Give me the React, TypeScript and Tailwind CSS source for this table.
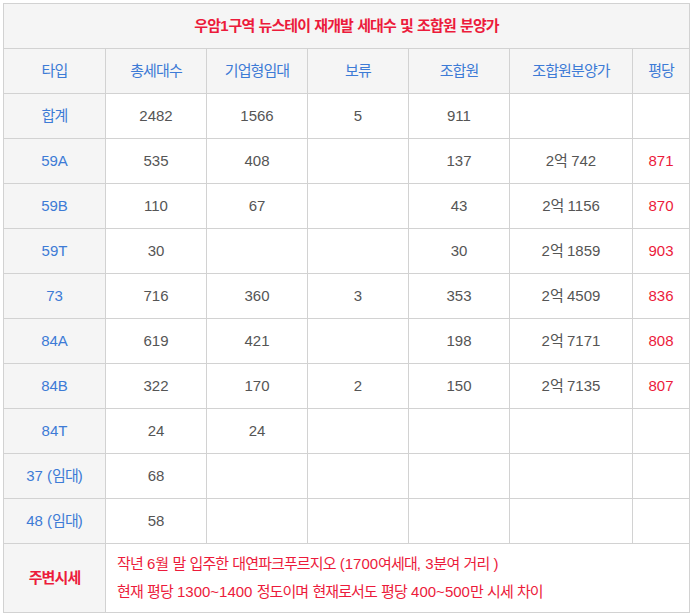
const rows: [string, string, string, string, string, string, string][] = [
  ['합계', '2482', '1566', '5', '911', '', ''],
  ['59A', '535', '408', '', '137', '2억 742', '871'],
  ['59B', '110', '67', '', '43', '2억 1156', '870'],
  ['59T', '30', '', '', '30', '2억 1859', '903'],
  ['73', '716', '360', '3', '353', '2억 4509', '836'],
  ['84A', '619', '421', '', '198', '2억 7171', '808'],
  ['84B', '322', '170', '2', '150', '2억 7135', '807'],
  ['84T', '24', '24', '', '', '', ''],
  ['37 (임대)', '68', '', '', '', '', ''],
  ['48 (임대)', '58', '', '', '', '', ''],
];

const headers = ['타입', '총세대수', '기업형임대', '보류', '조합원', '조합원분양가', '평당'];

// Hangul runs a touch tighter than Latin, like the original font
function K({ text }: { text: string }) {
  const parts = text.split(/([가-힣]+)/);
  return (
    <>
      {parts.map((p, i) =>
        /[가-힣]/.test(p) ? (
          <span key={i} className="tracking-[-0.9px]">
            {p}
          </span>
        ) : (
          <span key={i}>{p}</span>
        ),
      )}
    </>
  );
}

export default function App() {
  return (
    <div className="min-h-screen bg-white p-[3px] font-['Liberation_Sans','Noto_Sans_CJK_KR',sans-serif] text-[15px]">
      <table className="w-[686px] table-fixed border-collapse">
        <colgroup>
          <col className="w-[102px]" />
          <col className="w-[101px]" />
          <col className="w-[101px]" />
          <col className="w-[101px]" />
          <col className="w-[101px]" />
          <col className="w-[123px]" />
          <col className="w-[57px]" />
        </colgroup>
        <thead>
          <tr className="h-[45px]">
            <th colSpan={7} className="border border-[#d2d2d2] bg-[#f5f5f5] text-center font-bold text-[#ec1b3b]">
              <K text="우암1구역 뉴스테이 재개발 세대수 및 조합원 분양가" />
            </th>
          </tr>
          <tr className="h-[45px]">
            {headers.map((h) => (
              <th key={h} className="border border-[#d2d2d2] bg-[#f5f5f5] text-center font-normal text-[#3d7bd6]">
                <K text={h} />
              </th>
            ))}
          </tr>
        </thead>
        <tbody>
          {rows.map((r) => (
            <tr key={r[0]} className="h-[45px]">
              <td className="border border-[#d2d2d2] bg-[#f5f5f5] text-center text-[#3d7bd6]"><K text={r[0]} /></td>
              <td className="border border-[#d2d2d2] text-center text-[#555555]">{r[1]}</td>
              <td className="border border-[#d2d2d2] text-center text-[#555555]">{r[2]}</td>
              <td className="border border-[#d2d2d2] text-center text-[#555555]">{r[3]}</td>
              <td className="border border-[#d2d2d2] text-center text-[#555555]">{r[4]}</td>
              <td className="border border-[#d2d2d2] text-center text-[#555555]"><K text={r[5]} /></td>
              <td className="border border-[#d2d2d2] text-center text-[#ec1b3b]">{r[6]}</td>
            </tr>
          ))}
          <tr className="h-[69px]">
            <td className="border border-[#d2d2d2] bg-[#f5f5f5] text-center font-bold text-[#ec1b3b]">
              <K text="주변시세" />
            </td>
            <td colSpan={6} className="border border-[#d2d2d2] px-[11px] text-left leading-[28px] text-[#ec1b3b]">
              <K text="작년 6월 말 입주한 대연파크푸르지오 (1700여세대, 3분여 거리 )" />
              <br />
              <K text="현재 평당 1300~1400 정도이며 현재로서도 평당 400~500만 시세 차이" />
            </td>
          </tr>
        </tbody>
      </table>
    </div>
  );
}
